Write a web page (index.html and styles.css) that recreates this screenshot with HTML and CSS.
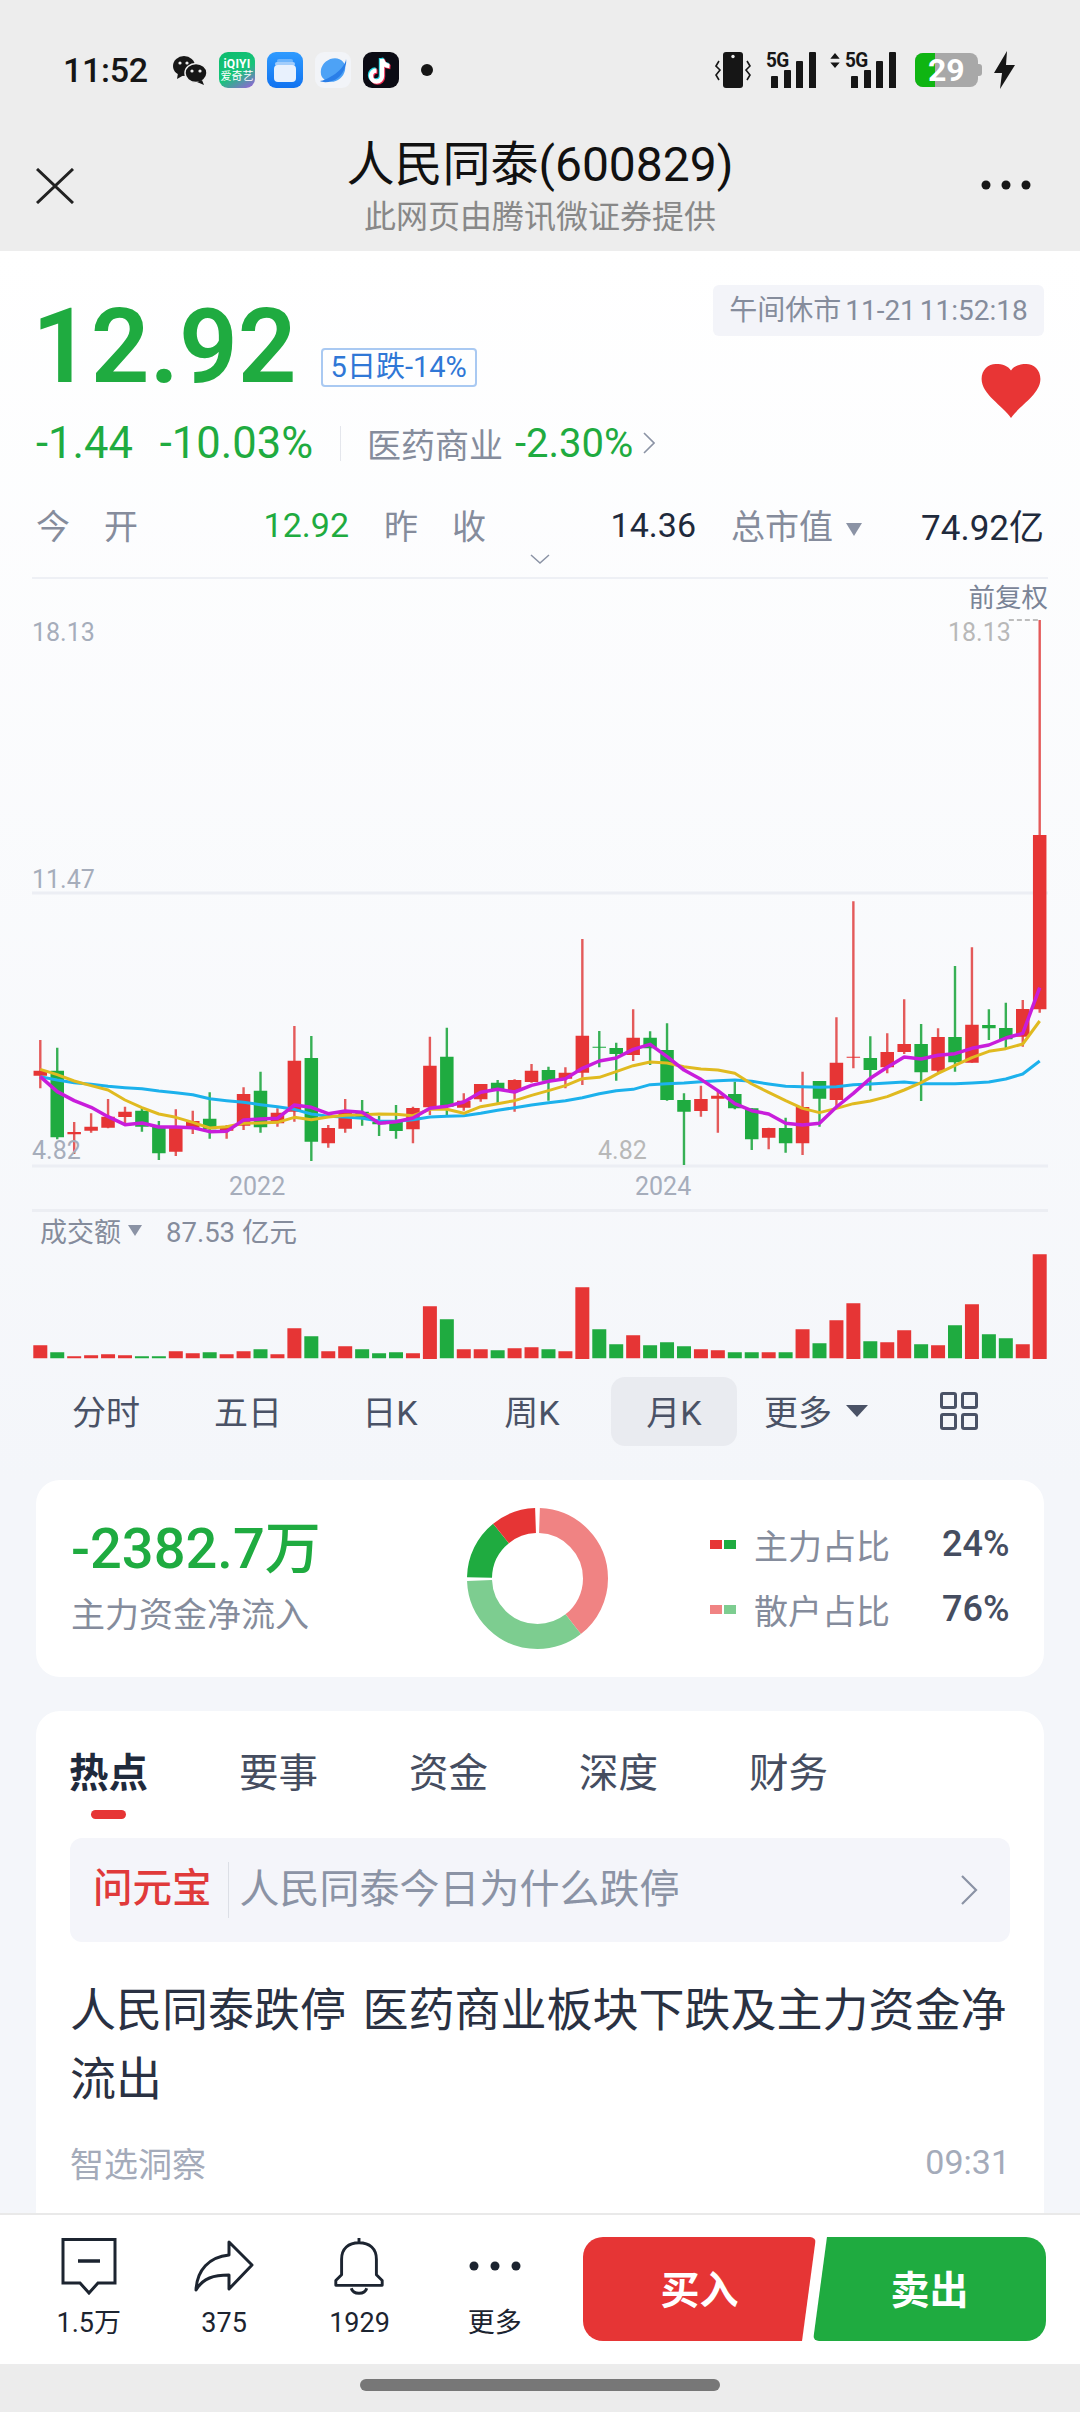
FILE: index.html
```html
<!DOCTYPE html>
<html lang="zh-CN">
<head>
<meta charset="utf-8">
<title>人民同泰(600829)</title>
<link rel="stylesheet" href="styles.css">
</head>
<body>
<div class="page">
  <header class="top">
    <div class="status">
      <span class="time">11:52</span>
      <div class="apps">
        <svg class="app wechat" viewBox="0 0 36 30"><ellipse cx="12" cy="11" rx="11" ry="10" fill="#161616"/><path d="M6 18l-1 6 7-4z" fill="#161616"/><ellipse cx="24" cy="18" rx="11" ry="9.5" fill="#161616" stroke="#ededed" stroke-width="1.5"/><path d="M30 25l2 5-7-3z" fill="#161616"/><circle cx="8" cy="8" r="1.6" fill="#ededed"/><circle cx="15" cy="8" r="1.6" fill="#ededed"/><circle cx="20" cy="16" r="1.6" fill="#ededed"/><circle cx="28" cy="16" r="1.6" fill="#ededed"/></svg>
        <div class="app iqiyi"><span class="iq-a">iQIYI</span><span class="iq-b">爱奇艺</span></div>
        <svg class="app square" viewBox="0 0 36 36"><defs><linearGradient id="fb" x1="0" y1="0" x2="0" y2="1"><stop offset="0" stop-color="#2f9bff"/><stop offset="1" stop-color="#1173f0"/></linearGradient></defs><rect width="36" height="36" rx="9" fill="url(#fb)"/><rect x="10" y="7" width="16" height="4" rx="2" fill="#6fb5fb"/><rect x="8" y="10" width="20" height="4" rx="2" fill="#a2cdfb"/><rect x="7" y="13" width="22" height="17" rx="4" fill="#e8f1fd"/></svg>
        <svg class="app square" viewBox="0 0 36 36"><rect width="36" height="36" rx="9" fill="#f2f4f8"/><ellipse cx="18" cy="18" rx="13" ry="11" transform="rotate(-40 18 18)" fill="#4da2f6"/><path d="M31 7C31 11 26 18 20 22C14 26 8 29 5 29C8 31 17 31 24 25C30 19 32 11 31 7Z" fill="#2a7ee8"/></svg>
        <svg class="app square" viewBox="0 0 36 36"><rect width="36" height="36" rx="9" fill="#0b0b14"/><g fill="none" stroke-width="4.4"><path d="M19 7V24a5.5 5.5 0 1 1-5.5-5.5M19 7c.7 4 3.5 6.700 7.500 7" stroke="#22d8e6" transform="translate(-1 -1)"/><path d="M19 7V24a5.500 5.500 0 1 1-5.500-5.500M19 7c.7 4 3.500 6.700 7.500 7" stroke="#f02a50" transform="translate(1 1)"/><path d="M19 7V24a5.500 5.500 0 1 1-5.500-5.500M19 7c.7 4 3.500 6.700 7.500 7" stroke="#fff"/></g></svg>
        <span class="notif-dot"></span>
      </div>
      <div class="sys">
        <svg class="vib" viewBox="0 0 38 36"><rect x="8" y="0" width="20" height="36" rx="3" fill="#161616"/><circle cx="18" cy="4.500" r="1.700" fill="#ededed"/><path d="M4 9L1 14L5 18L1 23L4 28M32 9L35 14L31 18L35 23L32 28" fill="none" stroke="#161616" stroke-width="1.600"/></svg>
        <div class="net">
          <span class="net-t">5G</span>
          <svg class="bars" viewBox="0 0 45 36"><path d="M0 36V25a1 1 0 0 1 1-1H6a1 1 0 0 1 1 1V36ZM13 36V19a1 1 0 0 1 1-1H19a1 1 0 0 1 1 1V36ZM25 36V10a1 1 0 0 1 1-1H31a1 1 0 0 1 1 1V36ZM38 36V1a1 1 0 0 1 1-1H44a1 1 0 0 1 1 1V36Z" fill="#161616"/></svg>
        </div>
        <div class="net net2">
          <svg class="updown" viewBox="0 0 10 16"><path d="M5 0L10 6H0ZM5 16L0 10H10Z" fill="#161616"/></svg>
          <span class="net-t">5G</span>
          <svg class="bars" viewBox="0 0 45 36"><path d="M0 36V25a1 1 0 0 1 1-1H6a1 1 0 0 1 1 1V36ZM13 36V19a1 1 0 0 1 1-1H19a1 1 0 0 1 1 1V36ZM25 36V10a1 1 0 0 1 1-1H31a1 1 0 0 1 1 1V36ZM38 36V1a1 1 0 0 1 1-1H44a1 1 0 0 1 1 1V36Z" fill="#161616"/></svg>
        </div>
        <div class="battery"><span class="batt-fill"></span><span class="batt-num">29</span><span class="batt-tip"></span></div>
        <svg class="bolt" viewBox="0 0 21 38"><path d="M13 0L0 22H8L6 38L21 14H12Z" fill="#161616"/></svg>
      </div>
    </div>
    <div class="titlebar">
      <svg class="close" viewBox="0 0 38 36"><path d="M1 1L37 35M37 1L1 35" fill="none" stroke="#222" stroke-width="3"/></svg>
      <div class="titles">
        <div class="title">人民同泰(600829)</div>
        <div class="subtitle">此网页由腾讯微证券提供</div>
      </div>
      <svg class="more" viewBox="0 0 50 10"><circle cx="5" cy="5" r="4.500"/><circle cx="25" cy="5" r="4.500"/><circle cx="45" cy="5" r="4.500"/></svg>
    </div>
  </header>

  <main class="main">
    <section class="quote">
      <div class="quote-head">
        <div class="price-line">
          <span class="price">12.92</span>
          <span class="badge">5日跌-14%</span>
        </div>
        <div class="quote-side">
          <span class="tag">午间休市 11-21 11:52:18</span>
          <svg class="heart" viewBox="0 0 64 58"><path d="M32 58C23 45 1 33 1 17C1 7 8 1 16 1C23 1 29 3 32 8C35 3 41 1 48 1C56 1 63 7 63 17C63 33 41 45 32 58Z" fill="#e83535"/></svg>
        </div>
      </div>
      <div class="change-row">
        <span class="chg chg-a">-1.44</span>
        <span class="chg chg-b">-10.03%</span>
        <span class="vline"></span>
        <span class="sector">医药商业</span>
        <span class="chg chg-c">-2.30%</span>
        <svg class="chev-r" viewBox="0 0 12 22"><path d="M1 1L11 11L1 21" fill="none" stroke="#8b93a5" stroke-width="1.600"/></svg>
      </div>
      <div class="stats">
        <div class="stat"><span class="lbl">今　开</span><span class="val green">12.92</span></div>
        <div class="stat"><span class="lbl">昨　收</span><span class="val val-mid">14.36</span></div>
        <div class="stat"><span class="lbl lbl-tri">总市值<i class="tri tri-cap"></i></span><span class="val">74.92亿</span></div>
      </div>
      <svg class="chev-d" viewBox="0 0 20 10"><path d="M1 1L10 9L19 1" fill="none" stroke="#8b93a5" stroke-width="1.500"/></svg>
    </section>

    <section class="chart">
      <svg class="kline" viewBox="-0.49 -843 59.98 1887" preserveAspectRatio="none">
        <path class="grid" d="M-.49 99H59.49M-.49 918H59.49"/>
        <path class="dash" d="M57.18 -720H58.9"/>
        <path class="wick red" d="M0 540V685M2 786V882M3 760V818M4 717V805M5 740V790M8 748V888M9 752V822M11 795V836M12 682V810M14 745V800M15 498V785M17 795V863M18 717V818M22 740V850M23 530V765M25 700V752M26 672V725M28 658V755M29 612V668M31 622V685M32 237V675M35 448V603M39 677V770M40 690V818M43 803V868M45 635V885M47 472V745M48 124V625M50 520V640M51 418V582M53 505V637M55 262V608M58 420V560M59 -720V458"/>
        <path class="wick green" d="M1 563V838M6 745V815M7 783V900M10 697V836M13 635V818M16 528V903M19 720V797M20 768V828M21 735V836M24 503V765M27 660V728M30 620V722M33 513V622M34 548V662M36 514V615M37 490V722M38 700V915M41 665V748M42 745V870M44 773V878M46 663V800M49 529V692M52 492V723M54 318V635M56 448V540M57 428V565"/>
        <path class="body red" d="M0 632V647M2 816V823M3 800V812M4 770V803M5 755V771M8 803V875M9 783V803M11 798V812M12 702V797M14 758V790M15 602V755M17 804V850M18 755V806M22 744V808M23 617V742M25 722V743M26 672V718M28 660V690M29 632V666M31 638V656M32 527V638M35 533V585M39 717V753M40 707V716M43 804V833M45 741V850M47 608V720M48 590V593M50 576V622M51 552V576M53 531V632M55 494V608M58 447V530M59 -75V448"/>
        <path class="body green" d="M1 632V832M6 752V800M7 800V880M10 776V808M13 692V802M16 594V845M19 755V775M20 785V793M21 785V813M24 590V740M27 668V688M30 630V662M33 560V563M34 564V582M36 533V565M37 570V720M38 720V755M41 702V745M42 745V838M44 804V850M46 663V716M49 594V630M52 552V637M54 531V607M56 495V505M57 504V538"/>
        <polyline class="ma ma-blue" points="0,650 1,660 2,668 3,673 4,679 5,683 6,686 7,693 8,698 9,704 10,716 11,722 12,727 13,734 14,740 15,748 16,762 17,769 18,771 19,775 20,783 21,784 22,779 23,771 24,769 25,767 26,760 27,751 28,743 29,735 30,728 31,722 32,713 33,701 34,692 35,688 36,674 37,671 38,669 39,665 40,662 41,660 42,664 43,672 44,679 45,680 46,682 47,680 48,674 49,672 50,669 51,666 52,671 53,671 54,671 55,669 56,666 57,657 58,642 59,603"/>
        <polyline class="ma ma-yellow" points="0,628 1,644 2,663 3,677 4,690 5,720 6,743 7,762 8,772 9,787 10,804 11,800 12,790 13,789 14,787 15,772 16,779 17,771 18,766 19,764 20,762 21,763 22,767 23,748 24,748 25,760 26,740 27,731 28,722 29,706 30,692 31,677 32,656 33,652 34,635 35,617 36,606 37,609 38,620 39,627 40,630 41,640 42,672 43,697 44,722 45,745 46,758 47,745 48,731 49,723 50,710 51,690 52,668 53,640 54,616 55,593 56,574 57,566 58,552 59,483"/>
        <polyline class="ma ma-magenta" points="0,650 1,695 2,722 3,742 4,770 5,794 6,789 7,801 8,801 9,803 10,815 11,814 12,780 13,777 14,775 15,735 16,742 17,761 18,753 19,757 20,790 21,785 22,774 23,745 24,739 25,726 26,697 27,688 28,696 29,676 30,664 31,656 32,625 33,603 34,594 35,568 36,553 37,590 38,630 39,658 40,692 41,731 42,752 43,762 44,790 45,795 46,790 47,741 48,700 49,655 50,622 51,591 52,597 53,586 54,581 55,565 56,555 57,534 58,520 59,383"/>
      </svg>
      <span class="axis fq">前复权</span>
      <span class="axis ax-high">18.13</span>
      <span class="axis ax-high2">18.13</span>
      <span class="axis ax-mid">11.47</span>
      <span class="axis ax-low">4.82</span>
      <span class="axis ax-low2">4.82</span>
      <span class="axis ax-y1">2022</span>
      <span class="axis ax-y2">2024</span>
    </section>

    <section class="volume">
      <div class="vol-head"><span class="vol-a">成交额</span><i class="tri tri-vol"></i><span class="vol-b">87.53 亿元</span></div>
      <svg class="vol-bars" viewBox="-0.49 210 59.98 345" preserveAspectRatio="none">
        <path class="vbar red" d="M0 496V535M2 529V535M3 526V535M4 523V535M5 526V535M8 514V535M9 520V535M11 523V535M12 514V535M14 523V535M15 445V535M17 514V535M18 499V535M22 520V535M23 379V537M25 508V535M26 508V535M28 505V535M29 502V535M31 514V535M32 322V537M35 466V535M39 508V535M40 511V535M43 517V535M45 448V535M47 421V535M48 370V537M50 487V535M51 451V535M53 496V535M55 373V537M58 493V535M59 223V537"/>
        <path class="vbar green" d="M1 517V535M6 529V535M7 529V535M10 517V535M13 508V535M16 469V535M19 508V535M20 520V535M21 517V535M24 418V535M27 511V535M30 508V535M33 448V535M34 493V535M36 496V535M37 487V535M38 499V535M41 517V535M42 517V535M44 517V535M46 490V535M49 484V535M52 493V535M54 436V535M56 463V535M57 475V535"/>
      </svg>
    </section>

    <nav class="periods">
      <span class="period">分时</span>
      <span class="period">五日</span>
      <span class="period">日K</span>
      <span class="period">周K</span>
      <span class="period active">月K</span>
      <span class="period">更多<i class="tri tri-more"></i></span>
      <span class="period"><svg class="grid-ico" viewBox="0 0 38 38"><g fill="none" stroke="#4a5266" stroke-width="3"><rect x="1.500" y="1.500" width="14" height="14" rx="1.500"/><rect x="22.500" y="1.500" width="14" height="14" rx="1.500"/><rect x="1.500" y="22.500" width="14" height="14" rx="1.500"/><rect x="22.500" y="22.500" width="14" height="14" rx="1.500"/></g></svg></span>
    </nav>

    <section class="card money">
      <div class="flow-text">
        <div class="flow-num">-2382.7万</div>
        <div class="flow-lbl">主力资金净流入</div>
      </div>
      <svg class="donut" viewBox="0 0 141 141">
        <g fill="none" stroke-width="25" transform="rotate(-90 70.500 70.500)">
          <circle class="seg" cx="70.500" cy="70.500" r="58" pathLength="360" stroke="#f08383" stroke-dasharray="140 220" stroke-dashoffset="-2"/>
          <circle class="seg" cx="70.500" cy="70.500" r="58" pathLength="360" stroke="#7dcd90" stroke-dasharray="126 234" stroke-dashoffset="-142"/>
          <circle class="seg" cx="70.500" cy="70.500" r="58" pathLength="360" stroke="#1fab40" stroke-dasharray="50 310" stroke-dashoffset="-271"/>
          <circle class="seg" cx="70.500" cy="70.500" r="58" pathLength="360" stroke="#e63535" stroke-dasharray="37 323" stroke-dashoffset="-321"/>
        </g>
      </svg>
      <div class="legend">
        <div class="leg-row"><span class="sw sw-red"></span><span class="sw sw-green"></span><span class="leg-lbl">主力占比</span><span class="leg-val">24%</span></div>
        <div class="leg-row"><span class="sw sw-lred"></span><span class="sw sw-lgreen"></span><span class="leg-lbl">散户占比</span><span class="leg-val">76%</span></div>
      </div>
    </section>

    <section class="card article">
      <div class="news-tabs">
        <div class="news-tab on">热点<span class="tab-bar"></span></div>
        <div class="news-tab">要事</div>
        <div class="news-tab">资金</div>
        <div class="news-tab">深度</div>
        <div class="news-tab">财务</div>
      </div>
      <div class="ask">
        <span class="ask-brand">问元宝</span>
        <span class="ask-line"></span>
        <span class="ask-q">人民同泰今日为什么跌停</span>
        <svg class="ask-chev" viewBox="0 0 18 30"><path d="M2 1L16 15L2 29" fill="none" stroke="#8b93a5" stroke-width="2.200"/></svg>
      </div>
      <h2 class="news-title">人民同泰跌停 医药商业板块下跌及主力资金净流出</h2>
      <div class="news-meta"><span>智选洞察</span><span>09:31</span></div>
    </section>
  </main>

  <footer class="bottom">
    <div class="actions">
      <div class="act"><svg class="ico" viewBox="0 0 56 58"><path d="M2 2.500H54V46H37L28 56L19 46H2Z" fill="none" stroke="#1c2430" stroke-width="3"/><path d="M17 24H39" stroke="#1c2430" stroke-width="3.500"/></svg><span>1.5万</span></div>
      <div class="act"><svg class="ico" viewBox="0 0 60 54"><path d="M35 3L58 26L35 50V36C20 36 9 39 2 51C3 31 15 18 35 16Z" fill="none" stroke="#1c2430" stroke-width="3" stroke-linejoin="round"/></svg><span>375</span></div>
      <div class="act"><svg class="ico" viewBox="0 0 52 60"><path d="M26 1V7M8 23C8 12 15 6 26 6C37 6 44 12 44 23V39L50 45V50H2V45L8 39Z" fill="none" stroke="#1c2430" stroke-width="3" stroke-linejoin="round"/><path d="M18 53C20 60 32 60 34 53" fill="none" stroke="#1c2430" stroke-width="3"/></svg><span>1929</span></div>
      <div class="act"><svg class="ico" viewBox="0 0 52 58"><circle cx="5" cy="29" r="4.500" fill="#1c2430"/><circle cx="26" cy="29" r="4.500" fill="#1c2430"/><circle cx="47" cy="29" r="4.500" fill="#1c2430"/></svg><span>更多</span></div>
    </div>
    <div class="trade">
      <div class="btn buy">买入</div>
      <div class="btn sell">卖出</div>
    </div>
  </footer>
  <div class="homebar"><span class="handle"></span></div>
</div>
</body>
</html>
```

FILE: styles.css
```css
* { box-sizing: border-box; }
html, body { margin: 0; padding: 0; }
body { font-family: Roboto, "Noto Sans CJK SC", sans-serif; color: #1f2a3c; }
svg { display: block; }
.page { width: 1080px; height: 2412px; display: flex; flex-direction: column; overflow: hidden; background: #f4f6fa; }

/* header */
.top { height: 251px; background: #ededed; flex: none; }
.status { height: 140px; display: flex; align-items: center; padding-left: 63px; }
.time { width: 109px; font-size: 34px; font-weight: 500; color: #161616; letter-spacing: -.3px; }
.apps { display: flex; align-items: center; width: 544px; }
.app { flex: none; }
.wechat { width: 36px; height: 30px; margin-right: 11px; }
.square { width: 36px; height: 36px; margin-right: 12px; }
.iqiyi { width: 36px; height: 36px; margin-right: 12px; border-radius: 9px; background: linear-gradient(150deg, #0dbb6d 0%, #17c47a 55%, #a05be0 100%); color: #fff; display: flex; flex-direction: column; align-items: center; justify-content: center; line-height: 1; font-weight: 700; }
.iq-a { font-size: 12px; letter-spacing: .3px; }
.iq-b { font-size: 11px; margin-top: 1px; font-weight: 400; }
.notif-dot { width: 12px; height: 12px; border-radius: 50%; background: #161616; margin-left: 10px; }
.sys { display: flex; align-items: center; }
.vib { width: 38px; height: 36px; margin-left: -1px; }
.net { display: flex; position: relative; align-items: flex-end; height: 36px; width: 54px; margin-left: 11px; }
.net-t { position: absolute; left: 2px; top: -2px; font-size: 20px; line-height: 20px; font-weight: 700; color: #161616; letter-spacing: -.8px; transform: scaleX(.95); transform-origin: left; }
.bars { position: absolute; left: 7px; top: 0; width: 45px; height: 36px; }
.net2 { width: 68px; margin-left: 12px; }
.net2 .net-t { left: 15px; }
.net2 .bars { left: 21px; }
.updown { position: absolute; left: 0; top: 1px; width: 10px; height: 15px; }
.battery { position: relative; width: 63px; height: 34px; margin-left: 17px; border-radius: 8px; background: #a8a8a8; overflow: visible; }
.batt-fill { position: absolute; left: 0; top: 0; bottom: 0; width: 20px; background: #0fb512; border-radius: 8px 0 0 8px; }
.batt-num { position: absolute; left: 13px; top: 0; font-size: 32px; line-height: 34px; font-weight: 700; color: #fff; }
.batt-tip { position: absolute; right: -4px; top: 11px; width: 4px; height: 12px; background: #a8a8a8; border-radius: 0 3px 3px 0; }
.bolt { width: 21px; height: 38px; margin-left: 16px; }
.titlebar { height: 111px; position: relative; display: flex; justify-content: center; }
.close { position: absolute; left: 36px; top: 28px; width: 38px; height: 36px; }
.more { position: absolute; left: 981px; top: 40px; width: 50px; height: 10px; fill: #161616; }
.titles { text-align: center; }
.title { font-size: 48px; line-height: 50px; color: #111; margin-top: 0; }
.subtitle { font-size: 32px; line-height: 36px; color: #888; margin-top: 9px; }

/* body */
.main { flex: 1; min-height: 0; overflow: hidden; background: linear-gradient(180deg, #fff 0, #f4f6fa 1229px); }
.quote-head { height: 167px; padding: 33px 36px 0; display: flex; justify-content: space-between; }
.price-line { display: flex; align-items: flex-end; height: 115px; margin-left: -4px; }
.price { font-size: 103px; line-height: 104px; font-weight: 600; color: #1fab40; }
.badge { margin: 0 0 12px 24px; height: 39px; width: 156px; border: 2px solid #a9c9f2; border-radius: 4px; font-size: 29px; line-height: 35px; color: #2f77d6; text-align: center; white-space: nowrap; }
.quote-side { display: flex; flex-direction: column; align-items: flex-end; padding-top: 1px; }
.tag { height: 51px; width: 331px; border-radius: 6px; background: #f3f4f9; font-size: 28px; line-height: 51px; color: #858c9c; text-align: center; white-space: nowrap; word-spacing: -3px; }
.heart { width: 68px; height: 62px; margin: 27px -1px 0 0; }
.change-row { height: 50px; display: flex; align-items: center; padding-left: 36px; }
.chg { font-size: 43.500px; color: #1fab40; white-space: nowrap; }
.chg-b { margin-left: 27px; }
.vline { width: 1px; height: 35px; background: #e4e6ec; margin-left: 27px; }
.sector { font-size: 34px; color: #858c9c; margin-left: 26px; }
.chg-c { font-size: 40px; margin-left: 12px; }
.chev-r { width: 12px; height: 22px; margin-left: 10px; }
.stats { margin-top: 31px; height: 50px; padding: 0 36px; display: grid; grid-template-columns: 313px 312px 313px; column-gap: 35px; }
.stat { display: flex; justify-content: space-between; align-items: center; white-space: nowrap; }
.lbl { font-size: 34px; color: #858c9c; }
.val { font-size: 35px; color: #1f2a3c; }
.val.green { color: #1fab40; font-size: 34px; }
.val.val-mid { font-size: 34px; }
.tri { display: inline-block; width: 0; height: 0; border-style: solid; border-color: #8b93a5 transparent transparent; }
.tri-cap { border-width: 13px 8px 0; margin-left: 13px; vertical-align: 3px; }
.chev-d { width: 20px; height: 10px; margin: 5px 0 13px 530px; }

.chart { position: relative; margin: 0 32px; height: 635px; border-top: 2px solid #eef0f5; border-bottom: 3px solid #eceef3; }
.kline { width: 1016px; height: 629px; }
.kline path, .kline polyline, .vol-bars path { vector-effect: non-scaling-stroke; fill: none; }
.grid { stroke: #eceef4; stroke-width: 3px; }
.dash { stroke: #bdbdbd; stroke-width: 2px; stroke-dasharray: 5 3; }
.wick { stroke-width: 2.400px; }
.wick.red { stroke: #e45a5a; }
.wick.green { stroke: #37b055; }
.body { stroke-width: 13.500px; }
.body.red, .vbar.red { stroke: #e63535; }
.body.green, .vbar.green { stroke: #1fab40; }
.vbar { stroke-width: 14px; }
.ma { stroke-width: 3px; stroke-linejoin: round; }
.ma-blue { stroke: #1cb1ec; }
.ma-yellow { stroke: #e0ba20; }
.ma-magenta { stroke: #c81ddb; stroke-width: 3.500px; }
.axis { position: absolute; font-size: 25px; line-height: 30px; color: #a6adbb; white-space: nowrap; }
.fq { right: 0; top: 4px; color: #7a8497; font-size: 26.500px; }
.ax-high { left: 0; top: 39px; }
.ax-high2 { left: 916px; top: 39px; color: #b8b8b8; }
.ax-mid { left: 0; top: 286px; }
.ax-low { left: 0; top: 557px; }
.ax-low2 { left: 566px; top: 557px; color: #b8b8b8; }
.ax-y1 { left: 197px; top: 593px; }
.ax-y2 { left: 603px; top: 593px; }

.volume { padding: 0 32px; }
.vol-head { height: 36px; margin-bottom: 2px; display: flex; align-items: center; padding-left: 8px; color: #858c9c; white-space: nowrap; }
.vol-a { font-size: 27px; }
.tri-vol { border-width: 11px 7.500px 0; margin-left: 7px; }
.vol-b { font-size: 27.500px; margin-left: 24px; }
.vol-bars { width: 1016px; height: 115px; }

.periods { margin-top: 12px; height: 69px; padding-left: 35px; display: grid; grid-template-columns: repeat(7, 142px); }
.period { display: flex; align-items: center; justify-content: center; font-size: 34px; color: #4a5266; border-radius: 14px; white-space: nowrap; padding-bottom: 2px; }
.period.active { background: #e9ebf0; margin: 0 8px; }
.tri-more { border-width: 12px 11px 0; border-top-color: #4a5266; margin-left: 14px; }
.grid-ico { width: 38px; height: 38px; margin-left: 2px; }

.card { background: #fff; margin: 34px 36px 0; border-radius: 24px; }
.money { height: 197px; display: flex; align-items: center; padding-left: 35px; }
.flow-text { width: 396px; }
.flow-num { font-size: 56px; line-height: 56px; font-weight: 500; color: #1fab40; }
.flow-lbl { font-size: 34px; line-height: 44px; color: #858c9c; margin-top: 16px; }
.donut { width: 141px; height: 141px; flex: none; }
.legend { margin: 0 0 4px 102px; width: 300px; height: 109px; display: flex; flex-direction: column; justify-content: space-between; }
.leg-row { display: flex; align-items: center; height: 44px; white-space: nowrap; }
.sw { width: 12px; height: 9px; margin-right: 2px; }
.sw-red { background: #e63535; }
.sw-green { background: #1fab40; }
.sw-lred { background: #f08383; }
.sw-lgreen { background: #7dcd90; }
.leg-lbl { font-size: 34px; color: #858c9c; margin-left: 16px; width: 188px; }
.leg-val { font-size: 36px; color: #454d60; font-weight: 500; }

.article { height: 600px; padding: 43px 34px 0; }
.news-tabs { display: flex; column-gap: 91px; height: 64px; margin-left: -1px; align-items: flex-start; }
.news-tab { position: relative; font-size: 39.500px; line-height: 40px; color: #454d60; white-space: nowrap; }
.news-tab.on { color: #1f2a3c; font-weight: 700; }
.tab-bar { display: block; width: 35px; height: 9px; background: #e63535; border-radius: 5px; margin: 16px auto 0; }
.ask { margin-top: 20px; height: 104px; border-radius: 12px; background: #f4f5fa; display: flex; align-items: center; padding: 0 32px 0 23px; }
.ask-brand { font-size: 39.500px; line-height: 50px; margin-bottom: 2px; color: #e03a3a; font-weight: 500; white-space: nowrap; }
.ask-line { width: 1px; height: 56px; background: #dcdfe6; margin: 0 11px 0 16px; }
.ask-q { flex: 1; font-size: 40px; line-height: 50px; margin-bottom: 1px; color: #8b93a5; white-space: nowrap; }
.ask-chev { width: 18px; height: 30px; }
.news-title { margin: 34px 0 0; font-size: 46px; line-height: 69px; font-weight: 400; color: #2a3142; word-spacing: 5px; }
.news-meta { margin-top: 28px; height: 40px; display: flex; justify-content: space-between; align-items: center; font-size: 34px; color: #a4abba; }

/* bottom */
.bottom { height: 151px; flex: none; background: #fff; border-top: 2px solid #e9e9e9; display: flex; padding: 22px 34px 0 21px; }
.actions { display: flex; width: 562px; flex: none; }
.act { width: 135.400px; flex: none; display: flex; flex-direction: column; align-items: center; font-size: 27px; color: #1c2430; white-space: nowrap; }
.act span { line-height: 28px; }
.ico { width: 60px; height: 58px; margin-bottom: 14px; }
.trade { display: flex; flex: none; }
.btn { width: 233px; height: 104px; padding-bottom: 4px; color: #fff; font-size: 39px; font-weight: 700; display: flex; align-items: center; justify-content: center; }
.buy { background: #e63535; border-radius: 20px 6px 6px 20px; clip-path: polygon(0 0, 100% 0, 94% 100%, 0 100%); }
.sell { background: #1fab40; margin-left: -3px; border-radius: 6px 20px 20px 6px; clip-path: polygon(6% 0, 100% 0, 100% 100%, 0 100%); }
.homebar { height: 48px; flex: none; background: #ececec; display: flex; justify-content: center; padding-top: 15px; }
.handle { width: 360px; height: 12px; border-radius: 6px; background: #777; }
```
